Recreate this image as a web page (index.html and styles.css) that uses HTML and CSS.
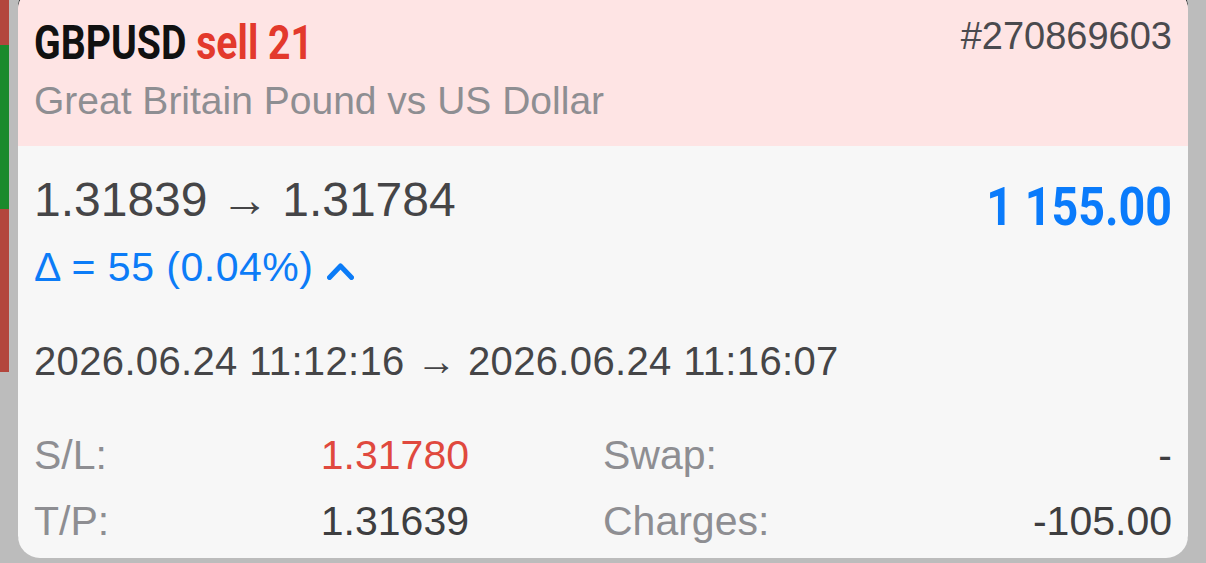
FILE: index.html
```html
<!DOCTYPE html>
<html lang="en">
<head>
  <meta charset="UTF-8">
  <title>Trade</title>
  <link rel="stylesheet" href="styles.css">
</head>
<body>
  <div class="trade-card">
    <div class="trade-head">
      <div class="title-row">
        <div class="symbol">GBPUSD <span class="side">sell 21</span></div>
        <div class="ticket">#270869603</div>
      </div>
      <div class="description">Great Britain Pound vs US Dollar</div>
    </div>

    <div class="trade-body">
      <div class="price-row">
        <div class="price-col">
          <div class="prices">1.31839 → 1.31784</div>
          <div class="delta">Δ = 55 (0.04%)<svg class="chevron" width="27" height="17" viewBox="0 0 27 17"><polyline points="2.5,14.5 13.5,3 24.5,14.5" fill="none" stroke="currentColor" stroke-width="5" stroke-linecap="round" stroke-linejoin="round"/></svg></div>
        </div>
        <div class="profit">1 155.00</div>
      </div>

      <div class="times">2026.06.24 11:12:16 → 2026.06.24 11:16:07</div>

      <div class="stats">
        <div class="stat"><span class="label">S/L:</span><span class="value loss">1.31780</span></div>
        <div class="stat"><span class="label">Swap:</span><span class="value">-</span></div>
        <div class="stat"><span class="label">T/P:</span><span class="value">1.31639</span></div>
        <div class="stat"><span class="label">Charges:</span><span class="value">-105.00</span></div>
      </div>
    </div>
  </div>
</body>
</html>
```

FILE: styles.css
```css
body {
  margin: 0;
  height: 563px;
  overflow: hidden;
  font-family: 'Liberation Sans', Arial, sans-serif;
  background:
    linear-gradient(#b3463d 0 45px, #1b8a2c 45px 209px, #b3463d 209px 372px, transparent 372px) 0 0 / 9px 100% no-repeat,
    #bcbcbc;
}

.trade-card {
  margin: -12px 18px 0;
  border-radius: 22px;
  overflow: hidden;
  background: #f7f7f7;
  box-shadow: 0 -3px 0 #3a3a3a;
}

.trade-head {
  background: #fee4e4;
  padding: 31px 16px 23px;
}

.title-row {
  display: flex;
  justify-content: space-between;
  align-items: flex-start;
}

/* condensed bold face: stretch Roboto down to the narrow width */
.symbol {
  display: inline-block;
  font-family: Roboto, sans-serif;
  font-weight: bold;
  font-size: 49px;
  line-height: 48px;
  color: #111;
  transform: scaleX(0.8);
  transform-origin: left center;
}

.symbol .side {
  color: #e3392c;
}

.ticket {
  font-size: 38px;
  line-height: 34px;
  color: #4a4a4e;
}

.description {
  margin-top: 12px;
  font-size: 39px;
  line-height: 44px;
  color: #8e8e92;
}

.trade-body {
  padding: 26px 16px 4px;
}

.price-row {
  display: flex;
  justify-content: space-between;
  align-items: flex-start;
}

.prices {
  font-size: 48px;
  line-height: 56px;
  color: #454547;
}

.delta {
  margin-top: 17px;
  font-size: 41px;
  line-height: 44px;
  letter-spacing: 0.5px;
  color: #0c7cf7;
}

.chevron {
  margin-left: 14px;
  vertical-align: 1px;
}

.profit {
  margin-top: 7px;
  font-family: Roboto, sans-serif;
  font-weight: bold;
  font-size: 53px;
  line-height: 56px;
  color: #0a7bfb;
  transform: scaleX(0.88);
  transform-origin: right center;
}

.times {
  margin-top: 50px;
  font-size: 40px;
  line-height: 44px;
  letter-spacing: 0.35px;
  color: #454547;
}

.stats {
  margin-top: 39px;
  display: grid;
  grid-template-columns: 1fr 1fr;
}

.stat {
  display: flex;
  justify-content: space-between;
  font-size: 41px;
  line-height: 66px;
}

.stat:nth-child(odd) {
  padding-right: 134px;
}

.label {
  color: #8e8e92;
}

.value {
  color: #3e3e40;
}

.value.loss {
  color: #e0493e;
}
```
